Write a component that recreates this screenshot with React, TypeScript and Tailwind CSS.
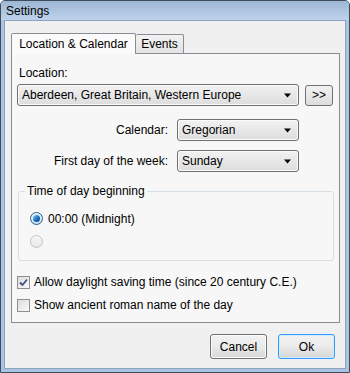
import React from "react";

const font = { fontFamily: '"Liberation Sans", Arial, sans-serif' };

function Arrow() {
  return (
    <svg width="8" height="5" viewBox="0 0 8 5" className="shrink-0">
      <path d="M0 0.5 H7 L3.5 4.5 Z" fill="#000" />
    </svg>
  );
}

function Combo({ text, w }: { text: string; w: string }) {
  return (
    <div
      className={`${w} h-[22px] flex items-center justify-between pl-[4px] pr-[6px] rounded-[3px] border border-[#707070] bg-gradient-to-b from-[#f2f2f2] to-[#dddddd] shadow-[inset_0_0_0_1px_#fbfbfb] text-[12px] text-black`}
    >
      <span className="leading-[14px]">{text}</span>
      <Arrow />
    </div>
  );
}

function Button({ children, focused }: { children: React.ReactNode; focused?: boolean }) {
  return (
    <div
      className={`w-[57px] h-[25px] flex items-center justify-center rounded-[3px] border ${
        focused ? "border-[#3399ff] shadow-[inset_0_0_0_1px_#cdeefb]" : "border-[#707070] shadow-[inset_0_0_0_1px_#fbfbfb]"
      } bg-gradient-to-b from-[#f2f2f2] via-[#ebebeb] to-[#d6d6d6] text-[12px] text-black`}
    >
      {children}
    </div>
  );
}

export default function App() {
  return (
    <div
      style={font}
      className="w-[350px] h-[373px] flex flex-col bg-[#aac3e0] border border-[#3e4d5e] rounded-t-[5px] overflow-hidden"
    >
      {/* title bar */}
      <div className="h-[19px] flex items-center pl-[5px] bg-gradient-to-b from-[#9db6d4] to-[#bdd3ec] text-[12px] text-black">
        Settings
      </div>
      {/* client */}
      <div className="flex-1 mx-[3px] mb-[3px] bg-[#f0f0f0] border border-[#8da3bd] flex flex-col pl-[6px] pr-[5px] pt-[11px]">
        {/* tabs */}
        <div className="flex items-end h-[21px] relative z-10">
          <div className="w-[125px] h-[21px] -mb-[1px] flex items-center justify-center bg-[#fafafa] border border-b-0 border-[#898c95] rounded-t-[2px] text-[12px] text-black">
            Location &amp; Calendar
          </div>
          <div className="w-[48px] h-[19px] flex items-center justify-center bg-gradient-to-b from-[#f2f2f2] to-[#e3e3e3] border border-l-0 border-b-0 border-[#898c95] rounded-t-[2px] text-[12px] text-black">
            Events
          </div>
        </div>
        {/* panel */}
        <div className="w-[329px] h-[270px] bg-[#f7f7f7] border border-[#898c95] flex flex-col pl-[5px] text-[12px] text-black">
          <div className="mt-[12px] ml-[2px] leading-[14px]">Location:</div>
          <div className="mt-[4px] flex items-center">
            <Combo text="Aberdeen, Great Britain, Western Europe" w="w-[282px]" />
            <div className="ml-[6px] w-[28px] h-[21px] flex items-center justify-center rounded-[3px] border border-[#707070] bg-gradient-to-b from-[#f2f2f2] to-[#dddddd] text-[12px]">
              &gt;&gt;
            </div>
          </div>
          <div className="mt-[13px] flex items-center">
            <div className="w-[160px] text-right pr-[9px] leading-[14px]">Calendar:</div>
            <Combo text="Gregorian" w="w-[122px]" />
          </div>
          <div className="mt-[9px] flex items-center">
            <div className="w-[160px] text-right pr-[9px] leading-[14px]">First day of the week:</div>
            <Combo text="Sunday" w="w-[122px]" />
          </div>
          {/* group box */}
          <div className="relative mt-[19px] ml-[1px] w-[316px] h-[70px] border border-[#d5dfe5] rounded-[3px]">
            <div className="absolute -top-[8px] left-[6px] px-[2px] bg-[#f7f7f7] leading-[14px]">Time of day beginning</div>
            <div className="flex flex-col pl-[11px] pt-[20px] gap-[10px]">
              <div className="flex items-center h-[13px]">
                <div className="w-[13px] h-[13px] rounded-full border border-[#2c628b] bg-gradient-to-b from-[#e6f2fa] to-[#c9def0] flex items-center justify-center">
                  <div className="w-[7px] h-[7px] rounded-full bg-gradient-to-br from-[#7dd0f7] via-[#1c79c5] to-[#0b3f8a]" />
                </div>
                <span className="ml-[5px] leading-[14px]">00:00 (Midnight)</span>
              </div>
              <div className="flex items-center h-[13px]">
                <div className="w-[13px] h-[13px] rounded-full border border-[#c4c4c4] bg-gradient-to-b from-[#f6f6f6] to-[#e8e8e8]" />
              </div>
            </div>
          </div>
          {/* checkboxes */}
          <div className="mt-[14px] flex items-center h-[14px]">
            <div className="w-[13px] h-[13px] border border-[#8e8f8f] bg-gradient-to-br from-[#dcdcdc] to-[#fafafa] flex items-center justify-center">
              <svg width="9" height="9" viewBox="0 0 9 9">
                <path d="M1 4.5 L3.5 7 L8 1.5" fill="none" stroke="#3c4f8a" strokeWidth="1.8" />
              </svg>
            </div>
            <span className="ml-[4px] leading-[14px]">Allow daylight saving time (since 20 century C.E.)</span>
          </div>
          <div className="mt-[9px] flex items-center h-[14px]">
            <div className="w-[13px] h-[13px] border border-[#8e8f8f] bg-gradient-to-br from-[#dcdcdc] to-[#fafafa]" />
            <span className="ml-[4px] leading-[14px]">Show ancient roman name of the day</span>
          </div>
        </div>
        {/* buttons */}
        <div className="mt-[11px] flex justify-end gap-[11px] pr-[5px]">
          <Button>Cancel</Button>
          <Button focused>Ok</Button>
        </div>
      </div>
    </div>
  );
}
